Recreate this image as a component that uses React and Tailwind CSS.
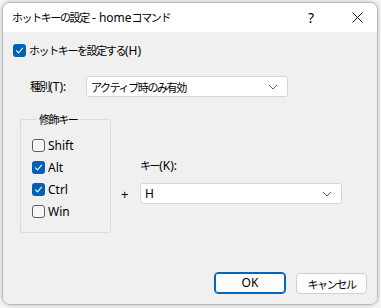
import React from 'react';

const jp = { fontFamily: '"Noto Sans CJK JP", "Liberation Sans", sans-serif' };
const latin = { fontFamily: '"Noto Sans", sans-serif' };

// Japanese runs are squeezed to match the narrow UI font; latin runs keep normal spacing
const J = ({ children }) => <span className="text-[11px] tracking-[-1.4px]">{children}</span>;
const L = ({ children }) => <span className="text-[12px] tracking-normal" style={latin}>{children}</span>;

const Check = ({ checked }) => (
  checked ? (
    <span className="w-[13px] h-[13px] rounded-[3px] bg-[#005fb8] flex items-center justify-center shrink-0">
      <svg width="9" height="9" viewBox="0 0 9 9" fill="none">
        <path d="M1.5 4.8 L3.5 6.8 L7.6 2.2" stroke="white" strokeWidth="1.1" strokeLinecap="round" strokeLinejoin="round" />
      </svg>
    </span>
  ) : (
    <span className="w-[13px] h-[13px] rounded-[3px] border border-[#5f5f5f] bg-[#f7f7f7] shrink-0" />
  )
);

const Chevron = () => (
  <svg width="10" height="6" viewBox="0 0 10 6" fill="none">
    <path d="M1 1 L5 5 L9 1" stroke="#5c5c5c" strokeWidth="1" />
  </svg>
);

const Select = ({ children, className }) => (
  <div className={`flex items-center justify-between bg-white border border-[#d6d6d6] rounded-[3px] pl-[4px] pr-[9px] ${className}`}>
    <span className="text-black leading-none">{children}</span>
    <Chevron />
  </div>
);

const App = () => {
  return (
    <div className="w-[381px] h-[308px] bg-[#f6f6f6] pt-[2px] pl-[2px] text-[12px] leading-[16px]" style={jp}>
      <div className="w-[376px] h-[303px] flex flex-col border border-[#b9b9b9] rounded-[8px] overflow-hidden shadow-[0_0_4px_rgba(0,0,0,0.25)]">
        <div className="h-[29px] bg-white flex items-center pl-[9px] shrink-0">
          <span className="text-black whitespace-pre">
            <J>ホットキーの設定</J><L> - home</L><J>コマンド</J>
          </span>
          <span className="ml-auto text-[14px] text-black mr-[38px]" style={latin}>?</span>
          <svg width="11" height="11" viewBox="0 0 11 11" className="mr-[14px]">
            <path d="M0.5 0.5 L10.5 10.5 M10.5 0.5 L0.5 10.5" stroke="#1a1a1a" strokeWidth="1" />
          </svg>
        </div>
        <div className="flex-1 bg-[#f0f0f0] flex flex-col text-black">
          <div className="flex items-center gap-[3px] mt-[10px] ml-[10px]">
            <Check checked />
            <span><J>ホットキーを設定する</J><L>(H)</L></span>
          </div>
          <div className="flex items-center mt-[17px] ml-[27px]">
            <span className="w-[56px]"><J>種別</J><L>(T):</L></span>
            <Select className="w-[202px] h-[21px]"><J>アクティブ時のみ有効</J></Select>
          </div>
          <div className="flex mt-[22px] ml-[17px]">
            <fieldset className="w-[91px] h-[120px] border border-[#dcdcdc] rounded-[2px] px-[11px] pt-[14px] -mt-[6px]">
              <legend className="px-[2px] ml-[5px] leading-[12px]"><J>修飾キー</J></legend>
              <div className="flex flex-col gap-[9px]">
                {[
                  ['Shift', false],
                  ['Alt', true],
                  ['Ctrl', true],
                  ['Win', false],
                ].map(([label, on]) => (
                  <div key={label} className="flex items-center gap-[3px] h-[13px]">
                    <Check checked={on} />
                    <L>{label}</L>
                  </div>
                ))}
              </div>
            </fieldset>
            <div className="flex flex-col ml-[13px] mt-[38px]">
              <span className="ml-[16px]"><J>キー</J><L>(K):</L></span>
              <div className="flex items-center mt-[9px]">
                <span className="w-[16px] text-[13px] -ml-[3px] mr-[3px]" style={latin}>+</span>
                <Select className="w-[202px] h-[21px]"><L>H</L></Select>
              </div>
            </div>
          </div>
          <div className="flex justify-end gap-[10px] mt-auto mb-[10px] mr-[10px]">
            <div className="w-[72px] h-[22px] bg-[#fdfdfd] border border-[#0067c0] rounded-[4px] shadow-[inset_0_0_0_1px_#0067c0] flex items-center justify-center">
              <L>OK</L>
            </div>
            <div className="w-[71px] h-[21px] mt-[1px] bg-[#fdfdfd] border border-[#d0d0d0] rounded-[4px] flex items-center justify-center">
              <J>キャンセル</J>
            </div>
          </div>
        </div>
      </div>
    </div>
  );
};

export default App;
